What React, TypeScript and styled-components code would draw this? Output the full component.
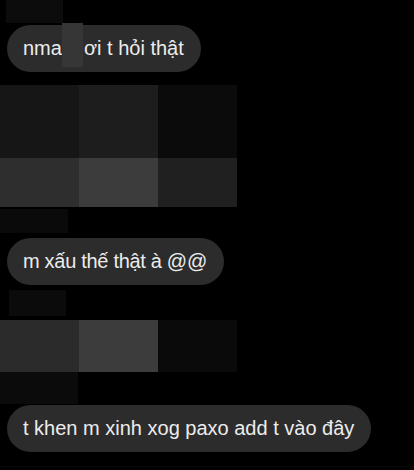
import React from "react";
import styled, { createGlobalStyle } from "styled-components";

const Global = createGlobalStyle`
  html, body { margin: 0; padding: 0; background: #000; }
  body { width: 414px; height: 470px; overflow: hidden; }
`;

const Screen = styled.div`
  width: 414px;
  height: 470px;
  background: #000;
  display: flex;
  flex-direction: column;
  align-items: flex-start;
  font-family: "Liberation Sans", Arial, sans-serif;
`;

const Blur = styled.div<{ $w: number; $h: number; $ml?: number; $mt?: number; $c: string }>`
  width: ${(p) => p.$w}px;
  height: ${(p) => p.$h}px;
  margin-left: ${(p) => p.$ml ?? 0}px;
  margin-top: ${(p) => p.$mt ?? 0}px;
  background: ${(p) => p.$c};
  flex: none;
`;

const Mosaic = styled.div<{ $mt: number; $rows: string }>`
  display: grid;
  grid-template-columns: 79px 79px 79px;
  grid-template-rows: ${(p) => p.$rows};
  margin-top: ${(p) => p.$mt}px;
  flex: none;
`;

const Tile = styled.div<{ $c: string }>`
  background: ${(p) => p.$c};
`;

const Bubble = styled.div<{ $mt: number; $tight?: boolean }>`
  position: relative;
  margin-top: ${(p) => p.$mt}px;
  margin-left: 7px;
  height: 47px;
  padding: 0 17px 0 16px;
  border-radius: 24px;
  background: #2c2c2c;
  color: #ececec;
  font-size: 20px;
  letter-spacing: ${(p) => (p.$tight ? "-0.3px" : "0")};
  display: flex;
  align-items: center;
  white-space: pre;
  flex: none;
`;

const Censor = styled.span`
  display: inline-block;
  width: 22px;
  position: relative;
  align-self: stretch;
  &::after {
    content: "";
    position: absolute;
    left: 0;
    top: -2px;
    width: 21px;
    height: 44px;
    background: #363636;
  }
`;

const BottomLine = styled.div`
  margin-top: 14px;
  width: 414px;
  height: 1px;
  background: #0b0b0b;
  flex: none;
`;

export default function App() {
  return (
    <>
      <Global />
      <Screen>
        <Blur $w={57} $h={23} $ml={6} $c="#0c0c0c" />
        <Bubble $mt={2}>
          nma<Censor />ơi t hỏi thật
        </Bubble>
        <Mosaic $mt={13} $rows="73px 49px">
          <Tile $c="#161616" />
          <Tile $c="#1d1d1d" />
          <Tile $c="#0b0b0b" />
          <Tile $c="#2e2e2e" />
          <Tile $c="#3c3c3c" />
          <Tile $c="#202020" />
        </Mosaic>
        <Blur $w={68} $h={24} $mt={2} $c="#0a0a0a" />
        <Bubble $mt={5} $tight>m xấu thế thật à @@</Bubble>
        <Blur $w={57} $h={26} $ml={9} $mt={5} $c="#0b0b0b" />
        <Mosaic $mt={4} $rows="52px">
          <Tile $c="#2b2b2b" />
          <Tile $c="#3c3c3c" />
          <Tile $c="#0a0a0a" />
        </Mosaic>
        <Blur $w={78} $h={32} $c="#0b0b0b" />
        <Bubble $mt={1}>t khen m xinh xog paxo add t vào đây</Bubble>
        <BottomLine />
      </Screen>
    </>
  );
}
